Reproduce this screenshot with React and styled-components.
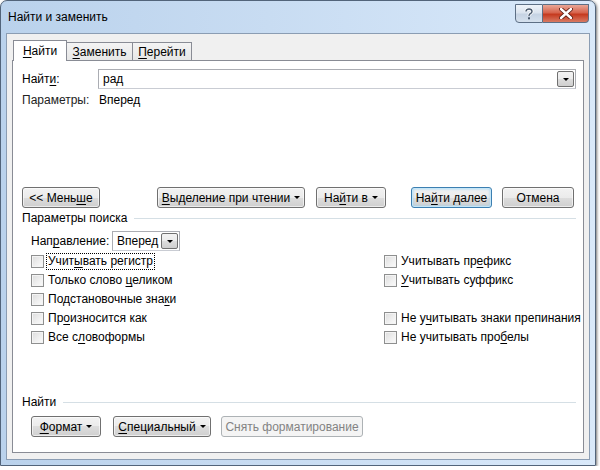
import React from 'react';
import styled, { createGlobalStyle, css } from 'styled-components';

const GlobalStyle = createGlobalStyle`
  html, body {
    margin: 0;
    padding: 0;
    background: #ffffff;
  }
  body {
    font-family: "Liberation Sans", Arial, sans-serif;
    font-size: 12px;
    color: #000;
  }
  * { box-sizing: border-box; }
  u { text-underline-offset: 2px; }
`;

const Window = styled.div`
  width: 596px;
  height: 466px;
  border: 1px solid #52647a;
  border-radius: 7px 7px 0 0;
  background: linear-gradient(to right, #bad2ec 0%, #c8dcf2 45%, #d9e9fa 100%);
  box-shadow: 1px 1px 3px rgba(0, 0, 0, 0.55);
  padding: 0 5px 5px 5px;
  display: flex;
  flex-direction: column;
`;

const TitleBar = styled.div`
  height: 32px;
  display: flex;
  align-items: flex-start;
  justify-content: space-between;
`;

const Title = styled.div`
  padding: 9px 0 0 2px;
  font-size: 12px;
  color: #000;
`;

const Controls = styled.div`
  display: flex;
  margin-top: 3px;
  margin-right: 1px;
`;

const CaptionButton = styled.div`
  height: 19px;
  display: flex;
  align-items: center;
  justify-content: center;
  border: 1px solid #5d6f85;
  ${(p) =>
    p.$close
      ? css`
          width: 46px;
          border-left: none;
          border-radius: 0 0 4px 0;
          background: linear-gradient(#e9a797 0%, #d6644d 45%, #c53a1f 55%, #d87a63 100%);
        `
      : css`
          width: 28px;
          border-radius: 0 0 0 4px;
          background: linear-gradient(#eef3f9 0%, #dbe4ef 45%, #c6d3e3 55%, #d5e1ee 100%);
        `}
`;

const Client = styled.div`
  flex: 1;
  background: #f0f0f0;
  border: 1px solid #8b9db3;
  padding: 6px 5px 6px 5px;
  display: flex;
  flex-direction: column;
`;

const TabRow = styled.div`
  height: 20px;
  display: flex;
  align-items: flex-end;
  padding-left: 1px;
`;

const Tab = styled.div`
  width: ${(p) => p.$w}px;
  display: flex;
  align-items: center;
  justify-content: center;
  border: 1px solid #898c95;
  border-bottom: none;
  margin-right: -1px;
  ${(p) =>
    p.$active
      ? css`
          height: 21px;
          margin-bottom: -1px;
          background: #fff;
          position: relative;
          z-index: 1;
        `
      : css`
          height: 18px;
          background: linear-gradient(#f4f4f4, #e6e6e6);
        `}
`;

const Panel = styled.div`
  flex: 1;
  background: #fff;
  border: 1px solid #898c95;
  padding: 8px 7px 0 9px;
  display: flex;
  flex-direction: column;
`;

const FieldRow = styled.div`
  display: flex;
  align-items: center;
  height: 20px;
  margin-top: ${(p) => p.$mt || 0}px;
`;

const Label = styled.div`
  width: ${(p) => p.$w}px;
  flex-shrink: 0;
  color: ${(p) => p.$color || '#000'};
`;

const Combo = styled.div`
  width: ${(p) => (p.$w ? `${p.$w}px` : 'auto')};
  flex: ${(p) => (p.$w ? '0 0 auto' : '1')};
  height: 20px;
  display: flex;
  align-items: center;
  border: 1px solid #abadb3;
  border-bottom-color: #c9ccd3;
  background: #fff;
  padding: 0 1px 0 4px;
`;

const ComboText = styled.div`
  flex: 1;
`;

const DropButton = styled.div`
  width: 17px;
  height: 16px;
  display: flex;
  align-items: center;
  justify-content: center;
  border: 1px solid #707070;
  border-radius: 2px;
  background: linear-gradient(#f3f3f3 0%, #ebebeb 50%, #dddddd 50%, #cfcfcf 100%);
`;

const Caret = styled.span`
  display: inline-block;
  width: 0;
  height: 0;
  border-left: ${(p) => p.$s || 3}px solid transparent;
  border-right: ${(p) => p.$s || 3}px solid transparent;
  border-top: ${(p) => p.$s || 3}px solid #000;
  margin-left: ${(p) => p.$ml || 0}px;
`;

const ButtonRow = styled.div`
  display: flex;
  align-items: center;
  margin-top: ${(p) => p.$mt || 0}px;
`;

const Button = styled.div`
  width: ${(p) => p.$w}px;
  height: 21px;
  margin-left: ${(p) => p.$ml || 0}px;
  display: flex;
  align-items: center;
  justify-content: center;
  white-space: nowrap;
  border: 1px solid #707070;
  border-radius: 3px;
  background: linear-gradient(#f2f2f2 0%, #ebebeb 50%, #dddddd 50%, #cfcfcf 100%);
  box-shadow: inset 0 0 0 1px rgba(255, 255, 255, 0.6);
  ${(p) =>
    p.$default &&
    css`
      border-color: #3c7fb1;
      box-shadow: inset 0 0 0 1px #c4e6f8, inset 0 0 3px 1px #9fd4f2;
    `}
  ${(p) =>
    p.$disabled &&
    css`
      border-color: #adb2b5;
      background: #f4f4f4;
      box-shadow: none;
      color: #838383;
    `}
`;

const Section = styled.div`
  display: flex;
  align-items: center;
  height: 20px;
  margin-top: ${(p) => p.$mt || 0}px;
  &::after {
    content: '';
    flex: 1;
    height: 1px;
    margin-left: 7px;
    margin-top: 1px;
    background: #d5dfe5;
  }
`;

const Indent = styled.div`
  padding-left: 9px;
  display: flex;
  flex-direction: column;
`;

const Grid = styled.div`
  margin-top: 1px;
  display: grid;
  grid-template-columns: 353px 1fr;
  grid-template-rows: repeat(5, 19px);
  grid-auto-flow: column;
`;

const Check = styled.label`
  display: flex;
  align-items: center;
  gap: 3px;
  white-space: nowrap;
`;

const Box = styled.span`
  width: 13px;
  height: 13px;
  flex-shrink: 0;
  border: 1px solid #8e8f8f;
  background: linear-gradient(135deg, #dcdcdc 0%, #f0f0f0 60%, #fbfbfb 100%);
  box-shadow: inset 0 0 0 1px #f4f4f4;
`;

const CheckText = styled.span`
  padding: 0 1px;
  line-height: 15px;
  outline: ${(p) => (p.$focus ? '1px dotted #000' : 'none')};
`;

function HelpGlyph() {
  return (
    <svg width="10" height="12" viewBox="0 0 10 12">
      <path
        d="M2 3.6 C2 1.8 3.4 1 5 1 C6.8 1 8 2 8 3.5 C8 5 6.5 5.4 5.6 6.2 C5.1 6.7 5 7.2 5 8"
        fill="none"
        stroke="#fff"
        strokeWidth="3"
      />
      <path
        d="M2 3.6 C2 1.8 3.4 1 5 1 C6.8 1 8 2 8 3.5 C8 5 6.5 5.4 5.6 6.2 C5.1 6.7 5 7.2 5 8"
        fill="none"
        stroke="#4a5a6e"
        strokeWidth="1.4"
      />
      <rect x="4" y="9.3" width="2" height="2" fill="#4a5a6e" />
    </svg>
  );
}

function CloseGlyph() {
  return (
    <svg width="14" height="11" viewBox="0 0 14 11">
      <path d="M2 1 L12 10 M12 1 L2 10" stroke="#5a1a10" strokeWidth="4.2" strokeLinecap="round" />
      <path d="M2 1 L12 10 M12 1 L2 10" stroke="#fff" strokeWidth="2.4" strokeLinecap="round" />
    </svg>
  );
}

const leftOptions = [
  { pre: 'Учит', key: 'ы', post: 'вать регистр', focus: true },
  { pre: 'Только слово ', key: 'ц', post: 'еликом' },
  { pre: 'Подстановочные зна', key: 'к', post: 'и' },
  { pre: 'Пр', key: 'о', post: 'износится как' },
  { pre: 'Все с', key: 'л', post: 'овоформы' },
];

const rightOptions = [
  { pre: 'Учитывать пр', key: 'е', post: 'фикс' },
  { pre: '', key: 'У', post: 'читывать суффикс' },
  null,
  { pre: 'Не у', key: 'ч', post: 'итывать знаки препинания' },
  { pre: 'Не учитывать про', key: 'б', post: 'елы' },
];

function Option({ item }) {
  if (!item) return <div />;
  return (
    <Check>
      <Box />
      <CheckText $focus={item.focus}>
        {item.pre}
        <u>{item.key}</u>
        {item.post}
      </CheckText>
    </Check>
  );
}

export default function App() {
  return (
    <>
      <GlobalStyle />
      <Window>
        <TitleBar>
          <Title>Найти и заменить</Title>
          <Controls>
            <CaptionButton>
              <HelpGlyph />
            </CaptionButton>
            <CaptionButton $close>
              <CloseGlyph />
            </CaptionButton>
          </Controls>
        </TitleBar>
        <Client>
          <TabRow>
            <Tab $active $w={54}>
              <u>Н</u>айти
            </Tab>
            <Tab $w={67}>
              <u>З</u>аменить
            </Tab>
            <Tab $w={60}>
              <u>П</u>ерейти
            </Tab>
          </TabRow>
          <Panel>
            <FieldRow>
              <Label $w={76}>
                Найт<u>и</u>:
              </Label>
              <Combo>
                <ComboText>рад</ComboText>
                <DropButton>
                  <Caret />
                </DropButton>
              </Combo>
            </FieldRow>
            <FieldRow $mt={1}>
              <Label $w={77} $color="#222">Параметры:</Label>
              <span>Вперед</span>
            </FieldRow>

            <ButtonRow $mt={77}>
              <Button $w={78}>
                &lt;&lt; Мень<u>ш</u>е
              </Button>
              <Button $w={148} $ml={57}>
                <u>В</u>ыделение при чтении
                <Caret $ml={4} />
              </Button>
              <Button $w={70} $ml={11}>
                На<u>й</u>ти в
                <Caret $ml={4} />
              </Button>
              <Button $w={81} $ml={25} $default>
                На<u>й</u>ти далее
              </Button>
              <Button $w={72} $ml={10}>
                Отмена
              </Button>
            </ButtonRow>

            <Section>Параметры поиска</Section>
            <Indent>
              <FieldRow $mt={3}>
                <Label $w={81}>
                  Нап<u>р</u>авление:
                </Label>
                <Combo $w={68}>
                  <ComboText>Вперед</ComboText>
                  <DropButton>
                    <Caret />
                  </DropButton>
                </Combo>
              </FieldRow>
              <Grid>
                {leftOptions.map((o, i) => (
                  <Option key={`l${i}`} item={o} />
                ))}
                {rightOptions.map((o, i) => (
                  <Option key={`r${i}`} item={o} />
                ))}
              </Grid>
            </Indent>

            <Section $mt={45}>Найти</Section>
            <Indent>
              <ButtonRow $mt={4}>
                <Button $w={70}>
                  <u>Ф</u>ормат
                  <Caret $ml={4} />
                </Button>
                <Button $w={98} $ml={12}>
                  <u>С</u>пециальный
                  <Caret $ml={4} />
                </Button>
                <Button $w={142} $ml={10} $disabled>
                  Снять форматирование
                </Button>
              </ButtonRow>
            </Indent>
          </Panel>
        </Client>
      </Window>
    </>
  );
}
